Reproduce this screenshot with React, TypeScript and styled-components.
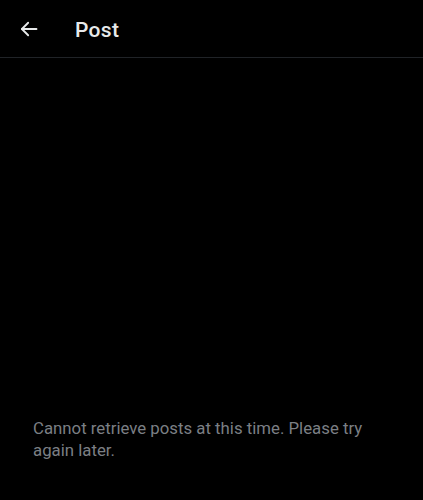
import React from "react";
import styled, { createGlobalStyle } from "styled-components";

const Global = createGlobalStyle`
  html, body { margin: 0; padding: 0; background: #000; }
  body { font-family: Roboto, "Noto Sans", sans-serif; -webkit-font-smoothing: antialiased; }
`;

const Page = styled.div`
  width: 423px;
  height: 500px;
  background: #000;
  display: flex;
  flex-direction: column;
`;

const Header = styled.header`
  height: 57px;
  display: flex;
  align-items: center;
  padding: 0 16px;
  border-bottom: 1px solid #202327;
  box-sizing: content-box;
`;

const BackButton = styled.button`
  width: 26px;
  height: 26px;
  padding: 0;
  margin-right: 33px;
  background: none;
  border: none;
  color: #e7e9ea;
  display: flex;
  align-items: center;
  justify-content: center;
`;

const Title = styled.h1`
  margin: 2px 0 0;
  font-size: 21px;
  font-weight: 500;
  color: #e7e9ea;
  letter-spacing: 0.3px;
`;

const Feed = styled.main`
  flex: 1;
  display: flex;
  flex-direction: column;
  justify-content: flex-end;
  padding: 0 33px 39px;
`;

const Message = styled.p`
  margin: 0;
  font-size: 16.8px;
  line-height: 22px;
  color: #7b7f84;
`;

export default function App() {
  return (
    <Page>
      <Global />
      <Header>
        <BackButton aria-label="Back">
          <svg width="20" height="20" viewBox="0 0 24 24" fill="none" stroke="currentColor" strokeWidth="2.2" strokeLinecap="round" strokeLinejoin="round">
            <path d="M21 12H3.5" />
            <path d="M11 4.5 3.5 12l7.5 7.5" />
          </svg>
        </BackButton>
        <Title>Post</Title>
      </Header>
      <Feed>
        <Message>Cannot retrieve posts at this time. Please try again later.</Message>
      </Feed>
    </Page>
  );
}
